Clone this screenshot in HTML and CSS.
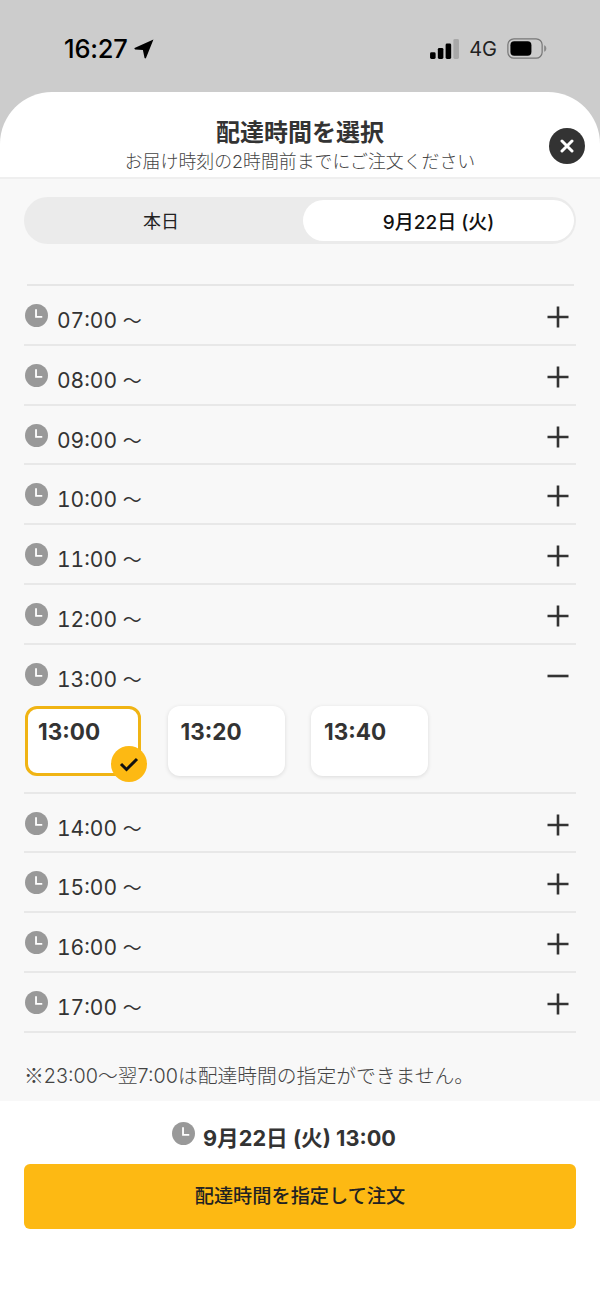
FILE: index.html
```html
<!DOCTYPE html>
<html lang="ja">
<head>
<meta charset="utf-8">
<title>配達時間を選択</title>
<link rel="stylesheet" href="styles.css">
</head>
<body>
<svg class="defs" width="0" height="0" aria-hidden="true">
  <symbol id="clock" viewBox="0 0 24 24">
    <circle cx="12" cy="12" r="12" fill="#999"/>
    <path d="M11.5 5.5v8h6.5" fill="none" stroke="#fff" stroke-width="1.9"/>
  </symbol>
  <symbol id="plus" viewBox="0 0 22 22">
    <path d="M0.5 11h21M11 0.5v21" fill="none" stroke="#333" stroke-width="2.6"/>
  </symbol>
  <symbol id="minus" viewBox="0 0 22 22">
    <path d="M0.5 11h21" fill="none" stroke="#333" stroke-width="2.6"/>
  </symbol>
</svg>
<div class="status">
  <div class="status-left">
    <span class="status-time">16:27</span>
    <svg class="arrow" viewBox="0 0 18 18"><path d="M17.5 0.5 L0.5 8.2 Q0 9 1 9.5 L8 10 L9.5 17.2 Q10.2 18 10.8 17.2 Z" fill="#000"/></svg>
  </div>
  <div class="status-right">
    <svg class="signal" viewBox="0 0 26 18"><rect x="0" y="12" width="5" height="6" rx="1.3" fill="#000"/><rect x="7" y="8" width="5" height="10" rx="1.3" fill="#000"/><rect x="14" y="4" width="5" height="14" rx="1.3" fill="#000"/><rect x="21" y="0" width="5" height="18" rx="1.3" fill="#a8a8a8"/></svg>
    <span class="net">4G</span>
    <svg class="battery" viewBox="0 0 36 19"><rect x="0.7" y="0.7" width="31" height="17.6" rx="5.5" fill="none" stroke="#777" stroke-width="1.1"/><rect x="3" y="3" width="19" height="13" rx="3.5" fill="#000"/><path d="M33.5 6.5c1.4.5 2 1.6 2 3s-.6 2.5-2 3z" fill="#8a8a8a"/></svg>
  </div>
</div>
<main class="sheet">
  <header class="sheet-head">
    <h1 class="title">配達時間を選択</h1>
    <p class="subtitle">お届け時刻の2時間前までにご注文ください</p>
    <button class="close" aria-label="閉じる"><svg viewBox="0 0 14 14"><path d="M2 2l10 10M12 2L2 12" fill="none" stroke="#fff" stroke-width="3" stroke-linecap="round"/></svg></button>
  </header>
  <section class="body">
    <div class="tabs">
      <div class="tab">本日</div>
      <div class="tab tab-active">9月22日 (火)</div>
    </div>
    <div class="list">
      <div class="row"><div class="row-label"><svg class="clock"><use href="#clock"/></svg><span>07:00 <i class="wave">～</i></span></div><svg class="toggle"><use href="#plus"/></svg></div>
      <div class="row"><div class="row-label"><svg class="clock"><use href="#clock"/></svg><span>08:00 <i class="wave">～</i></span></div><svg class="toggle"><use href="#plus"/></svg></div>
      <div class="row"><div class="row-label"><svg class="clock"><use href="#clock"/></svg><span>09:00 <i class="wave">～</i></span></div><svg class="toggle"><use href="#plus"/></svg></div>
      <div class="row"><div class="row-label"><svg class="clock"><use href="#clock"/></svg><span>10:00 <i class="wave">～</i></span></div><svg class="toggle"><use href="#plus"/></svg></div>
      <div class="row"><div class="row-label"><svg class="clock"><use href="#clock"/></svg><span>11:00 <i class="wave">～</i></span></div><svg class="toggle"><use href="#plus"/></svg></div>
      <div class="row"><div class="row-label"><svg class="clock"><use href="#clock"/></svg><span>12:00 <i class="wave">～</i></span></div><svg class="toggle"><use href="#plus"/></svg></div>
      <div class="row row-open">
        <div class="row-top"><div class="row-label"><svg class="clock"><use href="#clock"/></svg><span>13:00 <i class="wave">～</i></span></div><svg class="toggle"><use href="#minus"/></svg></div>
        <div class="slots">
          <div class="slot slot-on">13:00<span class="check"><svg viewBox="0 0 20 16"><path d="M2 8l5.5 5.5L18 3" fill="none" stroke="#111" stroke-width="3"/></svg></span></div>
          <div class="slot">13:20</div>
          <div class="slot">13:40</div>
        </div>
      </div>
      <div class="row"><div class="row-label"><svg class="clock"><use href="#clock"/></svg><span>14:00 <i class="wave">～</i></span></div><svg class="toggle"><use href="#plus"/></svg></div>
      <div class="row"><div class="row-label"><svg class="clock"><use href="#clock"/></svg><span>15:00 <i class="wave">～</i></span></div><svg class="toggle"><use href="#plus"/></svg></div>
      <div class="row"><div class="row-label"><svg class="clock"><use href="#clock"/></svg><span>16:00 <i class="wave">～</i></span></div><svg class="toggle"><use href="#plus"/></svg></div>
      <div class="row"><div class="row-label"><svg class="clock"><use href="#clock"/></svg><span>17:00 <i class="wave">～</i></span></div><svg class="toggle"><use href="#plus"/></svg></div>
    </div>
    <p class="note"><span class="mark">※</span>23:00～翌7:00は配達時間の指定ができません。</p>
  </section>
  <footer class="foot">
    <div class="picked"><svg class="clock clock-foot"><use href="#clock"/></svg><span>9月22日 (火) 13:00</span></div>
    <button class="submit">配達時間を指定して注文</button>
  </footer>
</main>
</body>
</html>
```
FILE: styles.css
```css
* { box-sizing: border-box; }
html, body { margin: 0; padding: 0; }
body {
  width: 600px;
  height: 1304px;
  overflow: hidden;
  background: #ccc;
  color: #333;
  font-family: Inter, "Noto Sans CJK JP", sans-serif;
}
.defs { display: block; height: 0; }
.status {
  height: 92px;
  display: flex;
  justify-content: space-between;
  padding: 34px 53px 0 64px;
  color: #000;
}
.status-left, .status-right { display: flex; align-items: center; height: 29px; }
.status-time { font-size: 25.5px; font-weight: 500; letter-spacing: -0.2px; }
.arrow { width: 20px; height: 20px; margin-left: 6px; }
.signal { width: 29px; height: 20px; margin-top: 1px; }
.net { font-size: 20px; margin-left: 10px; color: #222; }
.battery { width: 40px; height: 21px; margin-left: 10px; }
.sheet {
  height: 1212px;
  background: #fff;
  border-radius: 52px 52px 0 0;
  overflow: hidden;
}
.sheet-head {
  position: relative;
  height: 87px;
  padding-top: 26px;
  text-align: center;
  border-bottom: 2px solid #efefef;
}
.title { margin: 0; font-size: 24px; line-height: 30px; font-weight: 700; color: #333; }
.subtitle { margin: 2px 0 0; font-size: 17.9px; line-height: 24px; color: #444; font-weight: 300; }
.close {
  position: absolute;
  right: 15px;
  top: 36px;
  width: 36px;
  height: 36px;
  border: 0;
  padding: 11px;
  border-radius: 50%;
  background: #333;
  display: flex;
}
.close svg { width: 14px; height: 14px; }
.body { background: #f8f8f8; padding: 18px 24px 0; height: 922px; }
.tabs {
  display: flex;
  height: 47px;
  padding: 3px 2px 3px 3px;
  border-radius: 24px;
  background: #ebebeb;
}
.tab {
  flex: 1;
  display: flex;
  align-items: center;
  justify-content: center;
  font-size: 18px;
  color: #222;
  padding: 0 8px 1px 0;
  border-radius: 21px;
}
.tab-active { background: #fff; font-weight: 500; font-size: 19px; color: #111; flex: 0 0 271px; padding-right: 0; }
.list { margin-top: 40px; }
.list::before {
  content: "";
  display: block;
  height: 2px;
  margin: 0 2px 0 3px;
  background: #e6e6e6;
}
.row {
  min-height: 59.75px;
  border-bottom: 2px solid #e8e8e8;
  display: flex;
  justify-content: space-between;
  padding-top: 18px;
}
.row-open { display: block; padding-top: 0; }
.row-top { display: flex; justify-content: space-between; padding-top: 18px; height: 49px; }
.row-label {
  display: flex;
  align-items: flex-start;
  padding-left: 1px;
  font-size: 21px;
  line-height: 30px;
  color: #333;
  font-variant-numeric: tabular-nums;
}
.row-label span { margin-top: 2px; font-weight: 400; }
.wave { font-style: normal; font-size: 19px; }
.clock { width: 23px; height: 23px; margin-right: 9px; flex: none; }
.toggle { width: 22px; height: 22px; margin: 2px 7px 0 0; flex: none; }
.slots { display: flex; gap: 26.5px; padding: 12px 0 16px 1px; }
.slot {
  position: relative;
  width: 117px;
  height: 70px;
  padding: 11px 13px;
  background: #fff;
  border-radius: 12px;
  font-size: 22.5px;
  font-weight: 700;
  line-height: 30px;
  color: #333;
  box-shadow: 0 1px 4px rgba(0,0,0,0.12);
}
.slot-on { border: 3px solid #f0b414; padding: 8px 10px; box-shadow: none; width: 116px; }
.check {
  position: absolute;
  right: -9px;
  bottom: -9px;
  width: 36px;
  height: 36px;
  border-radius: 50%;
  background: #fdb913;
  display: flex;
  align-items: center;
  justify-content: center;
}
.check svg { width: 20px; height: 16px; }
.note { margin: 27px 0 0; font-size: 19.8px; line-height: 30px; color: #444; font-weight: 300; }
.mark { font-family: "Noto Sans CJK JP", sans-serif; }
.foot { padding: 19px 24px 0; }
.picked {
  display: flex;
  justify-content: center;
  align-items: flex-start;
  padding-right: 32px;
  font-size: 21.7px;
  font-weight: 700;
  line-height: 30px;
  color: #333;
  height: 44px;
}
.clock-foot { margin-top: 2px; margin-right: 8px; }
.picked span { margin-top: 3px; }
.submit {
  display: block;
  width: 100%;
  height: 65px;
  padding: 1px 0 0;
  border: 0;
  border-radius: 6px;
  background: #fdb913;
  color: #222;
  font: 500 19.2px/1 Inter, "Noto Sans CJK JP", sans-serif;
}
```
